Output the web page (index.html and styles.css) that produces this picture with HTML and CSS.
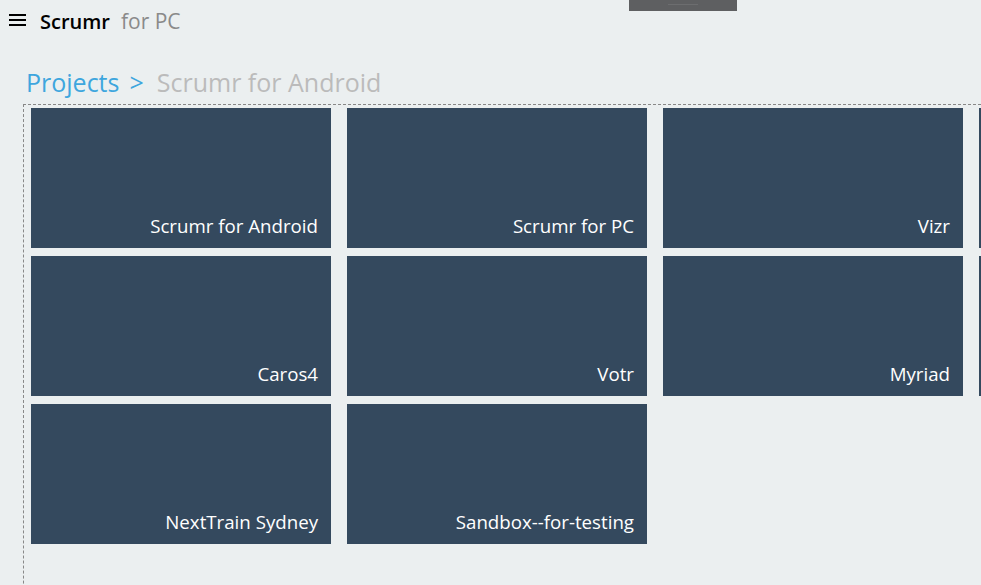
FILE: index.html
```html
<!DOCTYPE html>
<html>
<head>
<meta charset="utf-8">
<link rel="stylesheet" href="styles.css">
</head>
<body>
<div class="topgrip"><span class="grip-line"></span></div>
<header class="appbar">
  <svg class="menu" width="17" height="12" viewBox="0 0 17 12"><rect x="0" y="0" width="17" height="2" fill="#000"/><rect x="0" y="5" width="17" height="2" fill="#000"/><rect x="0" y="10" width="17" height="2" fill="#000"/></svg>
  <span class="app-name">Scrumr</span>
  <span class="app-sub">for PC</span>
</header>
<nav class="crumbs">
  <span class="crumb-link">Projects</span>
  <span class="crumb-sep">&gt;</span>
  <span class="crumb-current">Scrumr for Android</span>
</nav>
<main class="board">
  <div class="grid">
    <div class="tile"><span>Scrumr for Android</span></div>
    <div class="tile"><span>Scrumr for PC</span></div>
    <div class="tile"><span>Vizr</span></div>
    <div class="tile"></div>
    <div class="tile"><span>Caros4</span></div>
    <div class="tile"><span>Votr</span></div>
    <div class="tile"><span>Myriad</span></div>
    <div class="tile"></div>
    <div class="tile"><span>NextTrain Sydney</span></div>
    <div class="tile"><span>Sandbox--for-testing</span></div>
  </div>
</main>
</body>
</html>
```
FILE: styles.css
```css
html, body {
  margin: 0;
  padding: 0;
  width: 981px;
  height: 585px;
  overflow: hidden;
  background: #ebeff0;
  font-family: "Open Sans", "Noto Sans", sans-serif;
  position: relative;
}
.topgrip {
  position: absolute;
  left: 629px;
  top: 0;
  width: 108px;
  height: 11px;
  background: #5e5f61;
  display: flex;
  justify-content: center;
  align-items: flex-start;
}
.grip-line {
  margin-top: 4px;
  width: 30px;
  height: 1px;
  background: #6c6d6f;
}
.appbar {
  display: flex;
  align-items: center;
  height: 42px;
  padding-left: 9px;
}
.menu {
  margin-right: 14px;
  margin-top: -2px;
}
.app-name {
  font-size: 20px;
  font-weight: 600;
  color: #000;
}
.app-sub {
  font-size: 21px;
  color: #8a8a8a;
  margin-left: 11px;
}
.crumbs {
  display: flex;
  align-items: baseline;
  padding-left: 26px;
  margin-top: 23px;
  height: 39px;
  font-size: 25px;
}
.crumb-link { color: #3ea6de; }
.crumb-sep { color: #3ea6de; margin-left: 10px; margin-right: 13px; }
.crumb-current { color: #bbbbbb; }
.board {
  margin-left: 23px;
  border: 1px dashed #888;
  border-right: none;
  padding: 3px 0 60px 7px;
  height: 600px;
  box-sizing: border-box;
}
.grid {
  display: grid;
  grid-template-columns: repeat(4, 300px);
  column-gap: 16px;
  row-gap: 8px;
}
.tile {
  height: 140px;
  background: #34495e;
  display: flex;
  align-items: flex-end;
  justify-content: flex-end;
  padding: 0 13px 10px 0;
  box-sizing: border-box;
  color: #fff;
  font-size: 18.7px;
}
```
